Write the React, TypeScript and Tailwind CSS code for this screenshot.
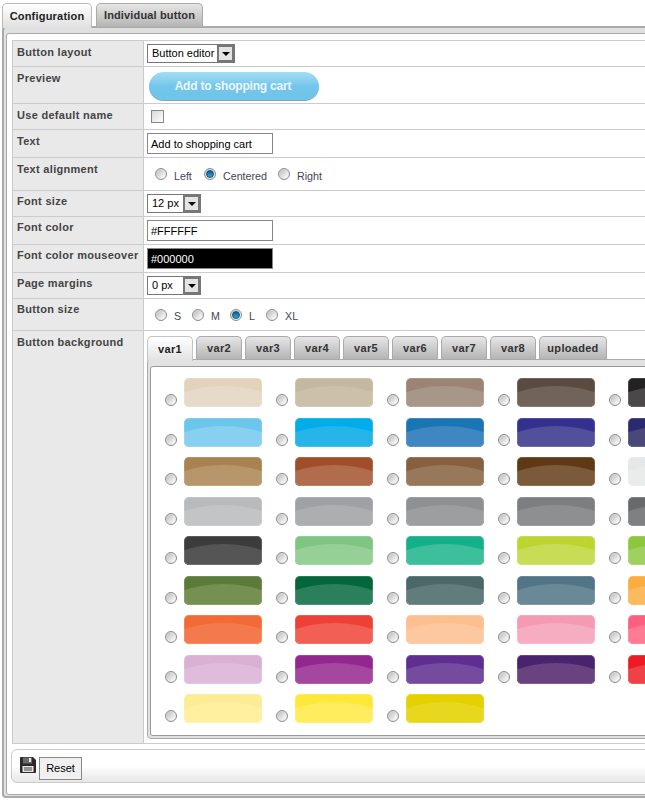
import React from "react";

const swatches = [
  ["bg-[#e3d3bd]", "bg-[#e8dac8]"], ["bg-[#c5b8a0]", "bg-[#ccc0ab]"], ["bg-[#9c8475]", "bg-[#a89689]"], ["bg-[#5b4a40]", "bg-[#716359]"], ["bg-[#232121]", "bg-[#4a4848]"],
  ["bg-[#6cc5ec]", "bg-[#88d0f0]"], ["bg-[#00ade9]", "bg-[#25b5e9]"], ["bg-[#1b75b5]", "bg-[#3f87c0]"], ["bg-[#33308f]", "bg-[#524f9b]"], ["bg-[#2c2a6e]", "bg-[#4a4877]"],
  ["bg-[#a98252]", "bg-[#b8966b]"], ["bg-[#a04e2a]", "bg-[#b06c4c]"], ["bg-[#86603f]", "bg-[#98785b]"], ["bg-[#5f3915]", "bg-[#7a5a3a]"], ["bg-[#e6e7e8]", "bg-[#eaebeb]"],
  ["bg-[#b9babb]", "bg-[#c3c4c5]"], ["bg-[#a0a1a4]", "bg-[#adaeb0]"], ["bg-[#8f9091]", "bg-[#9d9e9f]"], ["bg-[#7d7e80]", "bg-[#8e8f90]"], ["bg-[#696a6c]", "bg-[#7f8081]"],
  ["bg-[#3c3c3c]", "bg-[#555555]"], ["bg-[#7fc582]", "bg-[#96d096]"], ["bg-[#14b08a]", "bg-[#3cbf9a]"], ["bg-[#bdd531]", "bg-[#c8dc55]"], ["bg-[#8cc63f]", "bg-[#a0d060]"],
  ["bg-[#5b7b3a]", "bg-[#759050]"], ["bg-[#03663c]", "bg-[#2b7f5b]"], ["bg-[#4a6868]", "bg-[#607c7c]"], ["bg-[#517487]", "bg-[#6b8897]"], ["bg-[#fbae3f]", "bg-[#fcb95e]"],
  ["bg-[#f26a35]", "bg-[#f47a4e]"], ["bg-[#ee4036]", "bg-[#f15f55]"], ["bg-[#fdbf8f]", "bg-[#fdc89f]"], ["bg-[#f69ab3]", "bg-[#f7adc1]"], ["bg-[#ff5f7e]", "bg-[#ff7b93]"],
  ["bg-[#dab0d5]", "bg-[#dfbcdc]"], ["bg-[#92278f]", "bg-[#a3479f]"], ["bg-[#5f2e90]", "bg-[#754b9f]"], ["bg-[#4a236f]", "bg-[#684380]"], ["bg-[#ed1c24]", "bg-[#f04048]"],
  ["bg-[#feeb95]", "bg-[#fef09f]"], ["bg-[#ffe83a]", "bg-[#ffed5e]"], ["bg-[#e5d000]", "bg-[#e8d71f]"],
];

const Radio = ({ checked }: { checked?: boolean }) => (
  <span className="flex h-[12px] w-[12px] shrink-0 items-center justify-center rounded-full border border-[#8c8c8c] bg-gradient-to-br from-[#cfcfcf] to-[#f8f8f8]">
    {checked ? (
      <span className="h-[8px] w-[8px] rounded-full border border-[#0b4f75] bg-gradient-to-b from-[#0b5f8f] to-[#35a8dc]" />
    ) : (
      <span className="h-[8px] w-[8px] rounded-full bg-gradient-to-br from-[#bcbec0] to-white" />
    )}
  </span>
);

const Row = ({ label, h, pt = "pt-[5px]", children }: { label: string; h: string; pt?: string; children?: React.ReactNode }) => (
  <div className={`flex border-b border-[#ccc] ${h}`}>
    <div className={`w-[131px] shrink-0 border-r border-[#ccc] bg-[#e9e9e9] pl-[4px] ${pt} text-[11px] leading-[13px] font-bold tracking-[0.3px] text-[#444]`}>
      {label}
    </div>
    <div className="min-w-0 flex-1 bg-white pl-[3px]">{children}</div>
  </div>
);

const Select = ({ value, w, top }: { value: string; w: string; top: string }) => (
  <div className={`flex h-[19px] items-stretch border border-[#777] bg-white text-[11px] whitespace-nowrap text-black ${w} ${top}`}>
    <span className="flex-1 pl-[4px] leading-[17px]">{value}</span>
    <span className="flex w-[17px] items-center justify-center border-2 border-[#777] bg-[#e4e4e4]">
      <span className="mt-[1px] h-0 w-0 border-x-[4px] border-t-[4px] border-x-transparent border-t-black" />
    </span>
  </div>
);

const TextBox = ({ value, top, dark }: { value: string; top: string; dark?: boolean }) => (
  <div className={`h-[21px] w-[126px] border border-[#888] pl-[3px] text-[11px] leading-[20px] ${top} ${dark ? "bg-black text-white" : "bg-white text-black"}`}>
    {value}
  </div>
);

const RadioLabel = ({ text, checked, width }: { text: string; checked?: boolean; width: string }) => (
  <div className={`flex items-center gap-[7px] ${width}`}>
    <span className="mt-[-2px]">
      <Radio checked={checked} />
    </span>
    <span className="mt-[2px] text-[10.7px] leading-[13px] text-[#445]">{text}</span>
  </div>
);

const InnerTab = ({ label, w, active }: { label: string; w: string; active?: boolean }) => (
  <div
    className={`${w} flex items-center justify-center rounded-t-[5px] border border-b-0 text-[11px] font-bold tracking-[0.3px] ${
      active
        ? "h-[25px] border-[#c4c4c4] bg-gradient-to-b from-white to-[#e2e2e2] text-[#222]"
        : "h-[23px] border-[#aaa] bg-gradient-to-b from-[#e6e6e6] to-[#b4b4b4] text-[#333]"
    }`}
  >
    {label}
  </div>
);

const SaveIcon = () => (
  <svg width="16" height="16" viewBox="0 0 16 16">
    <path d="M0 1 Q0 0 1 0 H13 L16 3 V15 Q16 16 15 16 H1 Q0 16 0 15 Z" fill="#2a2a2a" />
    <rect x="3" y="0.5" width="9" height="6" fill="#6a6a6a" />
    <rect x="9" y="1" width="2" height="4" fill="#e8e8e8" />
    <rect x="2.5" y="9" width="11" height="6" fill="#e4e4e4" />
    <rect x="4" y="10.5" width="8" height="1" fill="#444" />
    <rect x="4" y="12.5" width="8" height="1" fill="#444" />
  </svg>
);

export default function App() {
  return (
    <div className="h-[801px] w-[645px] overflow-hidden bg-white font-['Liberation_Sans',Arial,sans-serif]">
      <div className="w-[780px] pl-[2px] pt-[3px]">
        {/* top tabs */}
        <div className="relative z-10 flex h-[23px] items-start gap-[4px]">
          <div className="flex h-[25px] w-[90px] items-center justify-center rounded-t-[5px] border border-b-0 border-[#bbb] bg-gradient-to-b from-white to-[#e0e0e0] text-[11px] font-bold tracking-[0.2px] text-[#222]">
            Configuration
          </div>
          <div className="flex h-[24px] w-[107px] items-center justify-center rounded-t-[5px] border border-b-0 border-[#aaa] bg-gradient-to-b from-[#e6e6e6] to-[#b4b4b4] text-[11px] font-bold tracking-[0.15px] text-[#333]">
            Individual button
          </div>
        </div>

        {/* outer panel */}
        <div className="h-[772px] rounded-[4px] border-2 border-[#aaa] bg-[#e0e0e0] pl-[2px] pr-[2px] pt-[5px] pb-[1px]">
          <div className="h-full rounded-[3px] border border-[#aaa] bg-white pl-[5px] pt-[6px]">
            {/* settings table */}
            <div className="border-l border-t border-[#ccc]">
              <Row label="Button layout" h="h-[26px]">
                <Select value="Button editor" w="w-[88px]" top="mt-[3px]" />
              </Row>
              <Row label="Preview" h="h-[37px]">
                <div className="ml-[2px] mt-[5px] flex h-[29px] w-[170px] items-center justify-center rounded-full border-b border-[#7ea9bd] bg-gradient-to-b from-[#a4def5] via-[#74c6eb] to-[#6ec4ea] pr-[2px] text-[12px] font-bold tracking-[-0.2px] text-white/85">
                  Add to shopping cart
                </div>
              </Row>
              <Row label="Use default name" h="h-[26px]">
                <span className="ml-[4px] mt-[6px] block h-[13px] w-[13px] border border-[#888] bg-gradient-to-br from-[#d8d8d8] to-white" />
              </Row>
              <Row label="Text" h="h-[28px]">
                <TextBox value="Add to shopping cart" top="mt-[3px]" />
              </Row>
              <Row label="Text alignment" h="h-[33px]">
                <div className="flex h-full items-center pl-[8px] pt-[2px]">
                  <RadioLabel text="Left" width="w-[49px]" />
                  <RadioLabel text="Centered" checked width="w-[74px]" />
                  <RadioLabel text="Right" width="w-[50px]" />
                </div>
              </Row>
              <Row label="Font size" h="h-[26px]" pt="pt-[4px]">
                <Select value="12 px" w="w-[54px]" top="mt-[3px]" />
              </Row>
              <Row label="Font color" h="h-[28px]" pt="pt-[4px]">
                <TextBox value="#FFFFFF" top="mt-[3px]" />
              </Row>
              <Row label="Font color mouseover" h="h-[28px]" pt="pt-[4px]">
                <TextBox value="#000000" top="mt-[3px]" dark />
              </Row>
              <Row label="Page margins" h="h-[26px]" pt="pt-[4px]">
                <Select value="0 px" w="w-[54px]" top="mt-[3px]" />
              </Row>
              <Row label="Button size" h="h-[32px]" pt="pt-[4px]">
                <div className="flex h-full items-center pl-[8px] pt-[2px]">
                  <RadioLabel text="S" width="w-[37px]" />
                  <RadioLabel text="M" width="w-[38px]" />
                  <RadioLabel text="L" checked width="w-[36px]" />
                  <RadioLabel text="XL" width="w-[50px]" />
                </div>
              </Row>
              <Row label="Button background" h="h-[413px]">
                <div className="pt-[5px]">
                  <div className="relative z-10 flex h-[23px] items-start gap-[3px]">
                    <InnerTab label="var1" w="w-[46px]" active />
                    <InnerTab label="var2" w="w-[46px]" />
                    <InnerTab label="var3" w="w-[46px]" />
                    <InnerTab label="var4" w="w-[46px]" />
                    <InnerTab label="var5" w="w-[46px]" />
                    <InnerTab label="var6" w="w-[46px]" />
                    <InnerTab label="var7" w="w-[46px]" />
                    <InnerTab label="var8" w="w-[46px]" />
                    <InnerTab label="uploaded" w="w-[68px]" />
                  </div>
                  <div className="h-[380px] rounded-[4px] border border-[#aaa] bg-[#e2e2e2] pl-[2px] pt-[6px] pb-[2px]">
                    <div className="h-full rounded-[3px] border border-[#999] bg-white pl-[14px] pt-[11px]">
                      <div className="grid w-[600px] grid-cols-[repeat(5,111px)] auto-rows-[29px] gap-y-[10.5px]">
                        {swatches.map(([top, bottom], i) => (
                          <div key={i} className="flex items-end gap-[7px]">
                            <span className="mb-[1px]">
                              <Radio />
                            </span>
                            <div className={`relative h-[29px] w-[78px] overflow-hidden rounded-[5px] ${top}`}>
                              <div className={`absolute left-[-20px] top-[8px] h-[50px] w-[118px] rounded-[50%] ${bottom}`} />
                              <div className="absolute inset-0 rounded-[5px] border border-white/15" />
                            </div>
                          </div>
                        ))}
                      </div>
                    </div>
                  </div>
                </div>
              </Row>
            </div>

            {/* bottom toolbar */}
            <div className="ml-[-1px] mt-[5px] flex h-[34px] gap-[3px] rounded-l-[6px] border border-[#ccc] bg-gradient-to-b from-white via-white to-[#e6e6e6] pl-[8px] pt-[7px]">
              <SaveIcon />
              <div className="flex h-[23px] w-[43px] items-center justify-center border border-[#888] bg-[#f0f0f0] text-[11px] text-black">
                Reset
              </div>
            </div>
          </div>
        </div>
      </div>
    </div>
  );
}
